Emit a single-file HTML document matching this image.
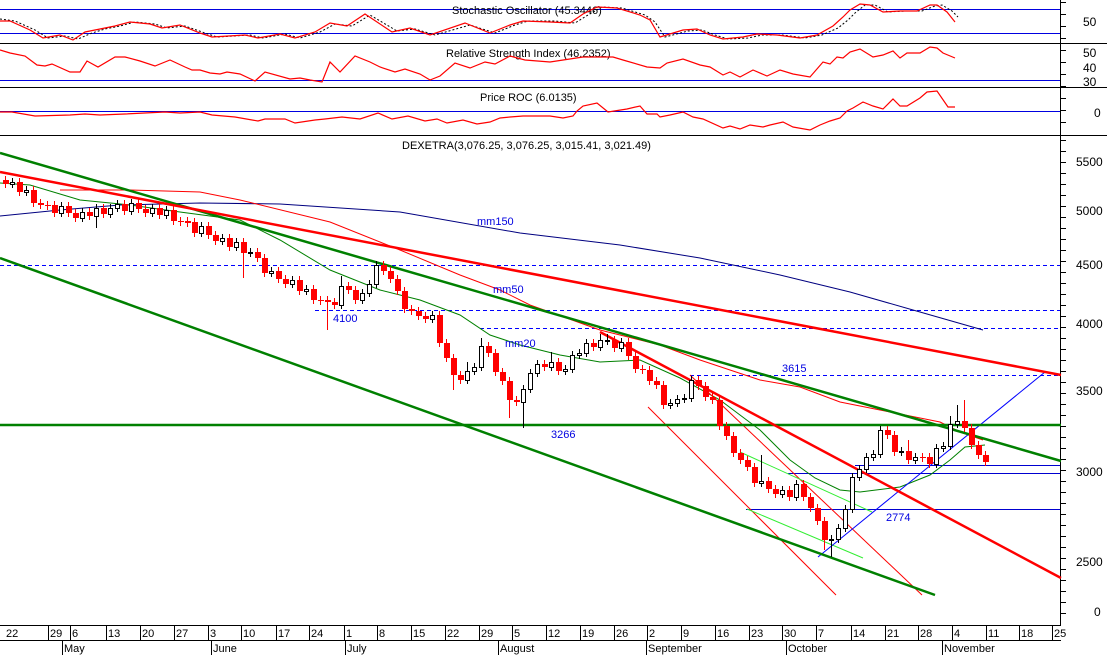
<!DOCTYPE html>
<html><head><meta charset="utf-8"><style>
html,body{margin:0;padding:0;background:#fff;width:1107px;height:655px;overflow:hidden}
svg{display:block;font-family:"Liberation Sans",Arial,sans-serif}
</style></head><body>
<svg width="1107" height="655" viewBox="0 0 1107 655" xmlns="http://www.w3.org/2000/svg">
<rect width="1107" height="655" fill="#fff"/>
<g stroke="#000" stroke-width="1">
<line x1="0" y1="43.5" x2="1107" y2="43.5"/>
<line x1="0" y1="87.5" x2="1107" y2="87.5"/>
<line x1="0" y1="135.5" x2="1107" y2="135.5"/>
<line x1="0" y1="625.5" x2="1061" y2="625.5"/>
<line x1="0" y1="640.5" x2="1061" y2="640.5"/>
<line x1="1060.5" y1="0" x2="1060.5" y2="625"/>
<path d="M1060 2.5h6M1060 14.5h6M1060 26.5h6M1060 38.5h6M1060 50.5h6M1060 62.5h6M1060 74.5h6M1060 86.5h6M1060 98.5h6M1060 110.5h6M1060 122.5h6M1060 140.5h6M1060 151.5h6M1060 162.5h6M1060 173.5h6M1060 184.5h6M1060 195.5h6M1060 206.5h6M1060 217.5h6M1060 228.5h6M1060 239.5h6M1060 250.5h6M1060 261.5h6M1060 272.5h6M1060 283.5h6M1060 294.5h6M1060 305.5h6M1060 316.5h6M1060 327.5h6M1060 338.5h6M1060 349.5h6M1060 360.5h6M1060 371.5h6M1060 382.5h6M1060 393.5h6M1060 404.5h6M1060 415.5h6M1060 426.5h6M1060 437.5h6M1060 448.5h6M1060 459.5h6M1060 470.5h6M1060 481.5h6M1060 492.5h6M1060 503.5h6M1060 514.5h6M1060 525.5h6M1060 536.5h6M1060 547.5h6M1060 558.5h6M1060 569.5h6M1060 580.5h6M1060 591.5h6M1060 602.5h6M1060 613.5h6"/>
</g>
<g stroke="#0000e0" stroke-width="1">
<line x1="0" y1="9.5" x2="1060" y2="9.5"/>
<line x1="0" y1="33.5" x2="1060" y2="33.5"/>
<line x1="0" y1="80.5" x2="1060" y2="80.5"/>
<line x1="0" y1="111.5" x2="1060" y2="111.5"/>
</g>
<g font-size="11" fill="#000">
<text x="452" y="14">Stochastic Oscillator (45.3446)</text>
<text x="446" y="57">Relative Strength Index (46.2352)</text>
<text x="480" y="101">Price ROC (6.0135)</text>
<text x="402" y="149">DEXETRA(3,076.25, 3,076.25, 3,015.41, 3,021.49)</text>
</g>
<polyline fill="none" stroke="#000" stroke-dasharray="2,2" points="0,19 15,21 35,30 48,38 65,36 78,39 92,33 105,29 120,26 135,22 155,24 167,28 185,26 205,33 217,37 250,35 263,38 285,34 300,38 320,32 335,24 352,26 370,15 397,31 415,29 435,35 470,25 495,33 515,25 528,21 555,21 575,23 588,15 602,7 622,8 645,15 655,22 665,37 688,31 702,30 715,35 728,39 748,38 762,35 782,35 805,38 822,35 838,28 848,20 855,13 865,5 875,5 888,12 905,11 922,11 935,6 942,5 952,11 958,17"/>
<polyline fill="none" stroke="#f00" stroke-width="1.2" points="0,21 10,21 30,30 43,38 60,35 73,40 85,32 100,29 115,26 130,22 150,24 162,28 180,25 200,33 212,37 245,35 258,38 280,34 295,38 315,32 330,23 347,26 365,14 392,32 410,28 430,35 465,23 490,33 510,25 523,21 550,22 570,23 583,14 597,7 617,8 640,15 650,20 660,37 683,30 697,29 710,35 723,39 743,37 757,34 777,35 800,38 817,35 833,26 843,17 850,10 860,4 870,5 883,12 900,11 917,11 930,5 937,5 947,12 955,22"/>
<polyline fill="none" stroke="#f00" stroke-width="1.2" points="0,50 10,53 25,56 37,65 45,66 52,64 70,72 80,72 87,61 98,67 115,57 125,57 140,61 155,66 170,60 185,67 192,70 200,70 210,73 220,74 227,72 240,74 255,81 265,72 290,79 300,78 310,80 322,82 330,62 340,72 355,56 370,62 380,67 395,72 405,69 420,74 430,80 440,76 455,63 470,68 485,62 495,64 510,56 525,60 550,62 583,57 613,57 623,60 647,67 660,68 667,63 683,59 700,65 710,67 723,75 730,72 740,77 753,70 767,76 780,70 793,74 810,77 823,62 830,64 837,57 843,58 850,52 860,49 873,57 883,55 893,51 900,58 907,53 920,53 930,47 937,48 943,53 955,58"/>
<polyline fill="none" stroke="#f00" stroke-width="1.2" points="0,112 12,112 35,116 70,115 85,114 100,115 125,114 165,112 180,113 200,112 212,115 235,117 258,121 265,119 285,119 295,123 315,120 325,119 342,117 360,119 378,113 392,119 408,116 425,121 437,119 447,123 463,120 477,124 490,122 500,118 510,117 523,116 550,116 563,118 573,116 577,111 583,106 597,103 608,112 627,109 640,106 647,114 657,114 660,117 670,115 683,112 693,117 703,119 723,128 730,126 740,129 750,125 763,127 770,125 783,122 793,127 810,130 820,125 830,121 840,118 847,111 853,108 863,102 873,106 883,109 893,99 900,106 907,106 920,98 927,92 937,91 948,107 955,107"/>
<g font-size="12" fill="#000">
<text x="1083" y="26">50</text>
<text x="1083" y="57">50</text>
<text x="1083" y="72">40</text>
<text x="1083" y="86">30</text>
<text x="1094" y="117">0</text>
<text x="1076" y="166">5500</text>
<text x="1076" y="215">5000</text>
<text x="1076" y="269">4500</text>
<text x="1076" y="328">4000</text>
<text x="1076" y="395">3500</text>
<text x="1076" y="476">3000</text>
<text x="1076" y="566">2500</text>
<text x="1094" y="616">0</text>
</g>
<g fill="none">
<line x1="0" y1="265.5" x2="1060" y2="265.5" stroke="#0000ff" stroke-dasharray="4,3"/>
<line x1="315" y1="310.5" x2="1060" y2="310.5" stroke="#0000ff" stroke-dasharray="4,3"/>
<line x1="480" y1="328.5" x2="1060" y2="328.5" stroke="#0000ff" stroke-dasharray="4,3"/>
<line x1="690" y1="375.5" x2="1060" y2="375.5" stroke="#0000ff" stroke-dasharray="4,3"/>
<line x1="855" y1="465.5" x2="1060" y2="465.5" stroke="#0000d0"/>
<line x1="788" y1="473.5" x2="1060" y2="473.5" stroke="#0000d0"/>
<line x1="746" y1="509.5" x2="1060" y2="509.5" stroke="#0000d0"/>
<polyline stroke="#000080" points="0,216 60,210 120,205 200,203 280,204 400,212 520,233 620,245 700,258 780,275 850,292 920,312 983,330"/>
<polyline stroke="#f00" points="60,190 130,190 200,192 240,200 330,222 400,250 460,275 500,290 530,305 600,330 660,345 700,360 760,380 800,387 840,402 880,410 940,422 960,432 983,440"/>
<polyline stroke="#008000" points="0,183 30,185 80,200 130,205 180,212 240,220 280,240 330,270 380,290 420,300 460,315 490,335 520,345 560,355 600,362 640,360 680,378 720,400 760,430 790,460 815,478 840,490 860,492 900,487 930,475 950,460 965,447 985,445"/>
<line x1="648" y1="407" x2="836" y2="595" stroke="#f00"/>
<line x1="690" y1="375" x2="922" y2="595" stroke="#f00"/>
<line x1="740" y1="452" x2="872" y2="512" stroke="#33ee33"/>
<line x1="747" y1="509" x2="863" y2="558" stroke="#33ee33"/>
<line x1="818" y1="557" x2="1045" y2="372" stroke="#0000ff"/>
<line x1="0" y1="153" x2="1061" y2="461" stroke="#008000" stroke-width="2.5"/>
<line x1="0" y1="258" x2="935" y2="595" stroke="#008000" stroke-width="2.5"/>
<line x1="0" y1="425" x2="1061" y2="425" stroke="#008000" stroke-width="2.5"/>
<line x1="0" y1="172" x2="1061" y2="375" stroke="#f00" stroke-width="2.5"/>
<line x1="600" y1="332" x2="1061" y2="578" stroke="#f00" stroke-width="2.5"/>
</g>
<!-- red candles -->
<path fill="none" stroke="#f00" d="M5.5 176V188M19.5 178V196M33.5 186V207M40.5 199V209M47.5 201V210M54.5 201V217M68.5 202V217M75.5 209V222M89.5 208V220M103.5 204V218M124.5 200V215M138.5 199V213M145.5 205V217M159.5 204V219M173.5 206V225M180.5 217V226M187.5 217V227M194.5 218V237M208.5 222V239M215.5 231V245M229.5 234V251M243.5 238V278M257.5 248V262M264.5 254V277M278.5 267V283M285.5 275V288M299.5 276V295M313.5 285V304M320.5 296V305M327.5 296V330M334.5 298V309M348.5 282V294M355.5 286V304M383.5 261V275M390.5 267V283M397.5 275V295M404.5 287V313M411.5 305V315M418.5 307V320M425.5 312V323M439.5 311V347M446.5 339V362M453.5 354V390M460.5 371V384M488.5 342V357M495.5 349V376M502.5 368V385M509.5 377V418M516.5 396V406M544.5 360V371M558.5 358V375M593.5 339V351M614.5 336V352M628.5 338V360M635.5 352V373M642.5 365V374M649.5 366V385M656.5 377V389M663.5 381V409M698.5 376V390M705.5 382V401M712.5 393V404M719.5 396V430M726.5 422V440M733.5 432V457M740.5 449V464M747.5 456V471M754.5 463V487M768.5 477V493M775.5 485V498M789.5 486V501M803.5 480V501M810.5 493V512M817.5 504V525M824.5 517V550M887.5 426V439M894.5 431V456M908.5 440V464M922.5 453V462M929.5 453V468M964.5 400V432M971.5 424V449M978.5 441V459M985.5 451V466"/>
<path fill="#f00" d="M3 180h6v4h-6zM17 182h6v10h-6zM31 190h6v13h-6zM38 203h6v2h-6zM45 205h6v1h-6zM52 205h6v8h-6zM66 206h6v7h-6zM73 213h6v5h-6zM87 212h6v4h-6zM101 208h6v6h-6zM122 204h6v7h-6zM136 203h6v6h-6zM143 209h6v4h-6zM157 208h6v7h-6zM171 210h6v11h-6zM178 221h6v1h-6zM185 221h6v2h-6zM192 222h6v11h-6zM206 226h6v9h-6zM213 235h6v6h-6zM227 238h6v9h-6zM241 242h6v11h-6zM255 252h6v6h-6zM262 258h6v15h-6zM276 271h6v8h-6zM283 279h6v5h-6zM297 280h6v11h-6zM311 289h6v11h-6zM318 300h6v1h-6zM325 300h6v2h-6zM332 302h6v3h-6zM346 286h6v4h-6zM353 290h6v10h-6zM381 265h6v6h-6zM388 271h6v8h-6zM395 279h6v12h-6zM402 291h6v18h-6zM409 309h6v2h-6zM416 311h6v5h-6zM423 316h6v3h-6zM437 315h6v28h-6zM444 343h6v15h-6zM451 358h6v17h-6zM458 375h6v5h-6zM486 346h6v7h-6zM493 353h6v19h-6zM500 372h6v9h-6zM507 381h6v19h-6zM514 400h6v2h-6zM542 364h6v3h-6zM556 362h6v9h-6zM591 343h6v4h-6zM612 340h6v8h-6zM626 342h6v14h-6zM633 356h6v13h-6zM640 369h6v1h-6zM647 370h6v11h-6zM654 381h6v4h-6zM661 385h6v20h-6zM696 380h6v6h-6zM703 386h6v11h-6zM710 397h6v3h-6zM717 400h6v26h-6zM724 426h6v10h-6zM731 436h6v17h-6zM738 453h6v7h-6zM745 460h6v7h-6zM752 467h6v16h-6zM766 481h6v8h-6zM773 489h6v5h-6zM787 490h6v7h-6zM801 484h6v13h-6zM808 497h6v11h-6zM815 508h6v13h-6zM822 521h6v19h-6zM885 430h6v5h-6zM892 435h6v17h-6zM906 451h6v9h-6zM920 457h6v1h-6zM927 457h6v7h-6zM962 421h6v7h-6zM969 428h6v17h-6zM976 445h6v10h-6zM983 455h6v7h-6z"/>
<!-- white candles -->
<path fill="none" stroke="#000" d="M12.5 178V188M26.5 186V196M61.5 202V217M82.5 208V222M96.5 204V228M110.5 204V218M117.5 200V212M131.5 199V215M152.5 204V217M166.5 206V219M201.5 222V237M222.5 234V245M236.5 238V251M250.5 248V257M271.5 267V277M292.5 276V288M306.5 285V295M341.5 276V309M362.5 289V304M369.5 280V297M376.5 261V288M432.5 311V323M467.5 362V384M474.5 363V375M481.5 338V371M523.5 385V428M530.5 369V393M537.5 360V377M551.5 352V371M565.5 365V375M572.5 351V373M579.5 349V359M586.5 339V357M600.5 334V351M607.5 334V345M621.5 338V352M670.5 399V409M677.5 395V407M684.5 394V403M691.5 376V402M761.5 455V487M782.5 486V498M796.5 480V501M831.5 535V557M838.5 524V543M845.5 505V532M852.5 473V513M859.5 465V481M866.5 453V473M873.5 450V461M880.5 426V458M901.5 447V456M915.5 453V464M936.5 444V468M943.5 442V452M950.5 416V450M957.5 405V428"/>
<g fill="#fff" stroke="#000">
<rect x="10.5" y="182.5" width="4" height="2"/><rect x="24.5" y="190.5" width="4" height="2"/><rect x="59.5" y="206.5" width="4" height="7"/><rect x="80.5" y="212.5" width="4" height="6"/><rect x="94.5" y="208.5" width="4" height="8"/><rect x="108.5" y="208.5" width="4" height="6"/><rect x="115.5" y="204.5" width="4" height="4"/><rect x="129.5" y="203.5" width="4" height="8"/><rect x="150.5" y="208.5" width="4" height="5"/><rect x="164.5" y="210.5" width="4" height="5"/><rect x="199.5" y="226.5" width="4" height="7"/><rect x="220.5" y="238.5" width="4" height="3"/><rect x="234.5" y="242.5" width="4" height="5"/><rect x="248.5" y="252.5" width="4" height="1"/><rect x="269.5" y="271.5" width="4" height="2"/><rect x="290.5" y="280.5" width="4" height="4"/><rect x="304.5" y="289.5" width="4" height="2"/><rect x="339.5" y="286.5" width="4" height="19"/><rect x="360.5" y="293.5" width="4" height="7"/><rect x="367.5" y="284.5" width="4" height="9"/><rect x="374.5" y="265.5" width="4" height="19"/><rect x="430.5" y="315.5" width="4" height="4"/><rect x="465.5" y="371.5" width="4" height="9"/><rect x="472.5" y="367.5" width="4" height="4"/><rect x="479.5" y="346.5" width="4" height="21"/><rect x="521.5" y="389.5" width="4" height="13"/><rect x="528.5" y="373.5" width="4" height="16"/><rect x="535.5" y="364.5" width="4" height="9"/><rect x="549.5" y="362.5" width="4" height="5"/><rect x="563.5" y="369.5" width="4" height="2"/><rect x="570.5" y="355.5" width="4" height="14"/><rect x="577.5" y="353.5" width="4" height="2"/><rect x="584.5" y="343.5" width="4" height="10"/><rect x="598.5" y="340.5" width="4" height="7"/><rect x="605.5" y="340.5" width="4" height="1"/><rect x="619.5" y="342.5" width="4" height="6"/><rect x="668.5" y="403.5" width="4" height="2"/><rect x="675.5" y="399.5" width="4" height="4"/><rect x="682.5" y="398.5" width="4" height="1"/><rect x="689.5" y="380.5" width="4" height="18"/><rect x="759.5" y="481.5" width="4" height="2"/><rect x="780.5" y="490.5" width="4" height="4"/><rect x="794.5" y="484.5" width="4" height="13"/><rect x="829.5" y="539.5" width="4" height="1"/><rect x="836.5" y="528.5" width="4" height="11"/><rect x="843.5" y="509.5" width="4" height="19"/><rect x="850.5" y="477.5" width="4" height="32"/><rect x="857.5" y="469.5" width="4" height="8"/><rect x="864.5" y="457.5" width="4" height="12"/><rect x="871.5" y="454.5" width="4" height="3"/><rect x="878.5" y="430.5" width="4" height="24"/><rect x="899.5" y="451.5" width="4" height="1"/><rect x="913.5" y="457.5" width="4" height="3"/><rect x="934.5" y="448.5" width="4" height="16"/><rect x="941.5" y="446.5" width="4" height="2"/><rect x="948.5" y="424.5" width="4" height="22"/><rect x="955.5" y="421.5" width="4" height="3"/>
</g>
<g font-size="11" fill="#0000e0">
<text x="477" y="225">mm150</text>
<text x="493" y="293">mm50</text>
<text x="333" y="322">4100</text>
<text x="505" y="347">mm20</text>
<text x="551" y="438">3266</text>
<text x="782" y="372">3615</text>
<text x="886" y="521">2774</text>
</g>
<path stroke="#000" fill="none" d="M48.5 626V640M70.5 626V640M106.5 626V640M140.5 626V640M174.5 626V640M208.5 626V640M241.5 626V640M276.5 626V640M309.5 626V640M344.5 626V640M377.5 626V640M411.5 626V640M445.5 626V640M479.5 626V640M512.5 626V640M546.5 626V640M580.5 626V640M614.5 626V640M647.5 626V640M681.5 626V640M715.5 626V640M749.5 626V640M782.5 626V640M816.5 626V640M851.5 626V640M885.5 626V640M918.5 626V640M952.5 626V640M986.5 626V640M1019.5 626V640M1052.5 626V640M62.5 641V655M211.5 641V655M345.5 641V655M498.5 641V655M646.5 641V655M786.5 641V655M942.5 641V655"/>
<g font-size="11" fill="#000">
<text x="6" y="637">22</text><text x="50" y="637">29</text><text x="72" y="637">6</text><text x="108" y="637">13</text><text x="142" y="637">20</text><text x="176" y="637">27</text><text x="210" y="637">3</text><text x="243" y="637">10</text><text x="278" y="637">17</text><text x="311" y="637">24</text><text x="346" y="637">1</text><text x="379" y="637">8</text><text x="413" y="637">15</text><text x="447" y="637">22</text><text x="481" y="637">29</text><text x="514" y="637">5</text><text x="548" y="637">12</text><text x="582" y="637">19</text><text x="616" y="637">26</text><text x="649" y="637">2</text><text x="683" y="637">9</text><text x="717" y="637">16</text><text x="751" y="637">23</text><text x="784" y="637">30</text><text x="818" y="637">7</text><text x="853" y="637">14</text><text x="887" y="637">21</text><text x="920" y="637">28</text><text x="954" y="637">4</text><text x="988" y="637">11</text><text x="1021" y="637">18</text><text x="1054" y="637">25</text>
<text x="64" y="652">May</text><text x="213" y="652">June</text><text x="347" y="652">July</text><text x="500" y="652">August</text><text x="648" y="652">September</text><text x="788" y="652">October</text><text x="944" y="652">November</text>
</g>
</svg>
</body></html>
